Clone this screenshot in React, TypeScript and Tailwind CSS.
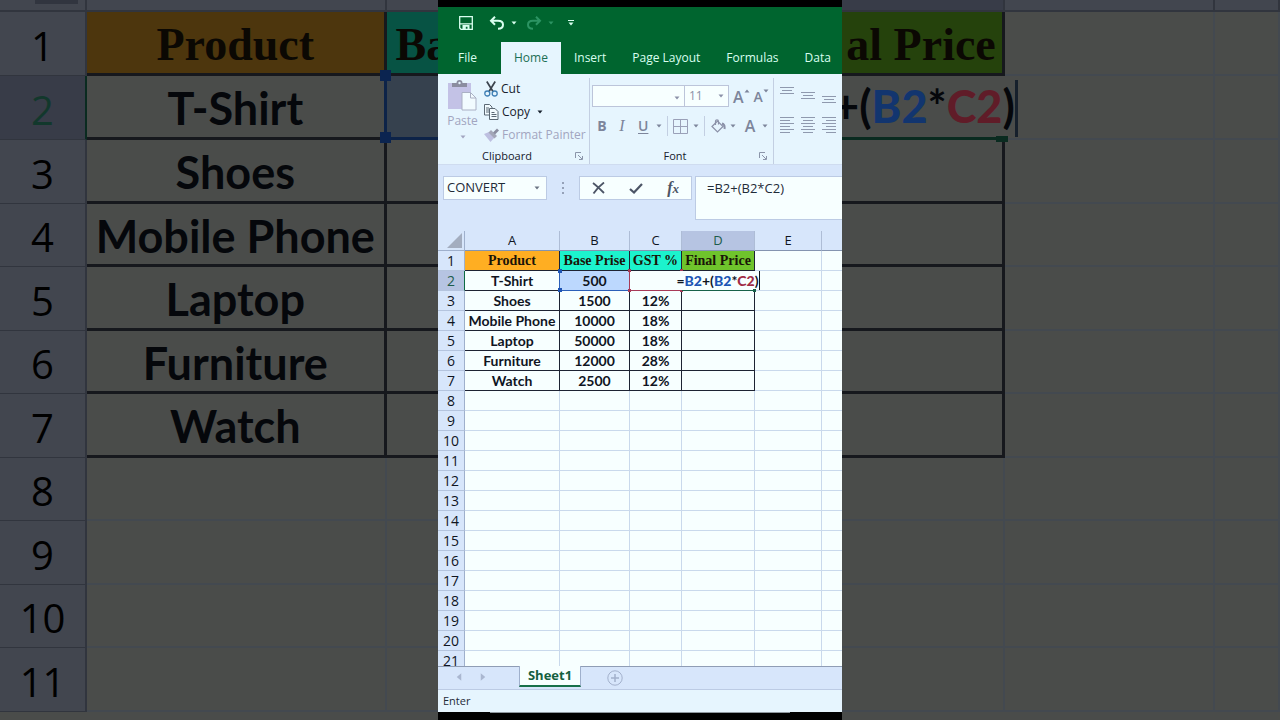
import type { ReactNode } from 'react';

interface RowData {
  product: string;
  price: string;
  gst: string;
}

const ROWS: RowData[] = [
  { product: 'T-Shirt', price: '500', gst: '' },
  { product: 'Shoes', price: '1500', gst: '12%' },
  { product: 'Mobile Phone', price: '10000', gst: '18%' },
  { product: 'Laptop', price: '50000', gst: '18%' },
  { product: 'Furniture', price: '12000', gst: '28%' },
  { product: 'Watch', price: '2500', gst: '12%' },
];

const EMPTY_ROWS = Array.from({ length: 14 }, (_, i) => i + 8);

const TABS = ['Insert', 'Page Layout', 'Formulas', 'Data'];

function Caret({ className = '' }: { className?: string }) {
  return (
    <svg viewBox="0 0 6 4" className={`w-[6px] h-1 shrink-0 ${className}`} fill="currentColor" aria-hidden="true">
      <path d="M.5.5h5L3 3.500z" />
    </svg>
  );
}

function Launcher() {
  return (
    <svg viewBox="0 0 8 8" className="size-2" fill="none" stroke="currentColor" aria-hidden="true">
      <path d="M.5 6V.5H6M3 3l4 4M7.500 4v3.500H4" />
    </svg>
  );
}

function SaveIcon() {
  return (
    <svg viewBox="0 0 14 14" className="size-[14px]" aria-hidden="true">
      <path d="M.7.7h12.600v12.600H2L.7 12z" fill="none" stroke="currentColor" strokeWidth="1.300" />
      <path d="M1 7.300h12V8.500H1zM3.500 9h7v4.500h-2V10.800H6.800v2.700H3.500z" fill="currentColor" />
    </svg>
  );
}

function UndoIcon({ className = '' }: { className?: string }) {
  return (
    <svg viewBox="0 0 16 14" className={`w-4 h-[14px] ${className}`} fill="none" stroke="currentColor" strokeWidth="2" aria-hidden="true">
      <path d="M6 .8 2 4.800l4 4M2.500 4.800H9c3 0 5 1.500 5 4s-2 4-5 4" />
    </svg>
  );
}

function PasteIcon() {
  return (
    <svg viewBox="0 0 29 31" className="w-[29px] h-[31px]" aria-hidden="true">
      <path d="M0 3h23v26H0z" fill="#c3c2e6" />
      <path d="M4 7V3h4.500C8.500 1 9.500 0 11.500 0S14.500 1 14.500 3H19v4z" fill="#8b8da0" />
      <circle cx="11.500" cy="3" r="1.200" fill="#e5f4fe" />
      <path d="M14 12.500h8.500l5.500 5.500v12H14z" fill="#f2fbff" stroke="#aab0c4" />
      <path d="M22.500 12.500V18H28" fill="none" stroke="#aab0c4" />
    </svg>
  );
}

function CutIcon() {
  return (
    <svg viewBox="0 0 14 16" className="w-[14px] h-4" fill="none" aria-hidden="true">
      <path d="M2.800.5 9 10.500M11.200.5 5 10.500" stroke="#3c434d" strokeWidth="1.700" />
      <circle cx="3.300" cy="12.500" r="2.500" stroke="#3f7fb4" strokeWidth="1.300" />
      <circle cx="10.700" cy="12.500" r="2.500" stroke="#3f7fb4" strokeWidth="1.300" />
    </svg>
  );
}

function CopyIcon() {
  return (
    <svg viewBox="0 0 15 16" className="w-[15px] h-4" fill="#f2fbff" stroke="#5b6874" aria-hidden="true">
      <path d="M.5.5h5l2.500 2.500v8H.5z" />
      <path d="M2 4h3M2 6h3M2 8h3" />
      <path d="M5.500 4.500h5.500l3 3v8H5.500z" />
      <path d="M7.500 8.500h3M7.500 10.500h5M7.500 12.500h5" />
    </svg>
  );
}

function PainterIcon() {
  return (
    <svg viewBox="0 0 15 14" className="w-[15px] h-[14px]" aria-hidden="true">
      <path d="M0 6 5 4l5.500 5.500L6.500 14z" fill="#bdbfe0" />
      <path d="m4.500 4.500 2.500-2.500 6 6-2.500 2.500z" fill="#a3a6b8" />
      <path d="m9 4.500 4-4 2 2-4 4z" fill="#8b8da0" />
    </svg>
  );
}

function BordersIcon() {
  return (
    <svg viewBox="0 0 15 15" className="size-[15px]" fill="none" stroke="#9aa0b8" aria-hidden="true">
      <path d="M.5.5h14v14H.5zM7.500 0v15M0 7.500h15" />
    </svg>
  );
}

function FillIcon() {
  return (
    <svg viewBox="0 0 15 14" className="w-[15px] h-[14px]" fill="none" stroke="#8b91a8" strokeWidth="1.200" aria-hidden="true">
      <path d="M1 7.500 6.500 2l5.500 5.500-5.500 5.500z" />
      <path d="M4.500 6V2.500C4.500.2 7.500.2 7.500 2.500v3" />
      <path d="M11 4.500c2 .5 3 2 2.500 5.500" strokeWidth="2" />
    </svg>
  );
}

function Lines({ d }: { d: string }) {
  return (
    <svg viewBox="0 0 14 16" className="w-[14px] h-4" fill="none" stroke="#8f99ae" aria-hidden="true">
      <path d={d} />
    </svg>
  );
}

const ALIGN_TOP = [
  { label: 'Top align', d: 'M0 .5h14M2 3.500h10M0 6.500h14' },
  { label: 'Middle align', d: 'M0 5.500h14M2 8.500h10M0 11.500h14' },
  { label: 'Bottom align', d: 'M0 9.500h14M2 12.500h10M0 15.500h14' },
];

const ALIGN_TEXT = [
  { label: 'Align left', d: 'M0 .5h14M0 3.500h10M0 6.500h14M0 9.500h10M0 12.500h14M0 15.500h10' },
  { label: 'Center', d: 'M0 .5h14M2 3.500h10M0 6.500h14M2 9.500h10M0 12.500h14M2 15.500h10' },
  { label: 'Align right', d: 'M0 .5h14M4 3.500h10M0 6.500h14M4 9.500h10M0 12.500h14M4 15.500h10' },
];

function Group({ label, className = '', children }: { label?: string; className?: string; children: ReactNode }) {
  return (
    <section aria-label={label ?? 'Alignment'} className={`flex flex-col shrink-0 ${className}`}>
      <div className="flex-1 min-h-0">{children}</div>
      {label && (
        <div className="flex items-center shrink-0 h-4 pr-[6px] text-[11px] text-[#16202c]">
          <span className="flex-1 text-center pl-[1px]">{label}</span>
          <button aria-label={`${label} settings`} className="text-[#8b95aa]"><Launcher /></button>
        </div>
      )}
    </section>
  );
}

function TitleBar() {
  return (
    <header className="bg-[#00652f] text-[#d9fff0]">
      <div className="flex items-center h-8 pl-[21px]">
        <button aria-label="Save"><SaveIcon /></button>
        <button aria-label="Undo" className="ml-4"><UndoIcon /></button>
        <button aria-label="Undo history" className="ml-[6px]"><Caret /></button>
        <button aria-label="Redo" className="ml-[9px] text-[#2c9463]"><UndoIcon className="-scale-x-100" /></button>
        <button aria-label="Redo history" className="ml-[6px] text-[#2c9463]"><Caret /></button>
        <button aria-label="Customize toolbar" className="ml-[14px] flex flex-col items-center gap-px">
          <span className="w-[6px] h-px bg-current" />
          <Caret />
        </button>
      </div>
      <nav className="flex pt-[3px] text-xs">
        <button className="h-8 w-[63px] pr-1 shrink-0">File</button>
        <button className="h-8 px-[13px] shrink-0 bg-[#e6f5fe] text-[#1c6f55]">Home</button>
        {TABS.map((t) => (
          <button key={t} className="h-8 px-[13px] shrink-0 whitespace-nowrap">{t}</button>
        ))}
      </nav>
    </header>
  );
}

function Ribbon() {
  return (
    <div className="flex h-[91px] pt-1 bg-[#e6f5fe] border-b border-[#cfdcf0] overflow-hidden">
      <Group label="Clipboard" className="w-[152px] border-r border-[#c3cfe2]">
        <div className="flex gap-[5px] pl-2 text-xs">
          <button className="flex flex-col items-center w-[33px] pt-[2px] text-[#a2a5c0]">
            <PasteIcon />
            <span className="leading-5">Paste</span>
            <Caret className="mt-1" />
          </button>
          <div className="flex flex-col text-[#16202c]">
            <button className="flex items-center gap-[3px] h-[23px] -mt-px"><CutIcon />Cut</button>
            <button className="flex items-center gap-[3px] h-[23px]"><CopyIcon />Copy<Caret className="ml-1" /></button>
            <button className="flex items-center gap-[3px] h-[23px] whitespace-nowrap text-[#a2a5c0]"><PainterIcon />Format Painter</button>
          </div>
        </div>
      </Group>

      <Group label="Font" className="w-[184px] border-r border-[#c3cfe2] text-[#7d859b]">
        <div className="flex items-start pt-[7px] pl-[2px]">
          <div className="grid items-center w-[93px] h-[22px] border border-[#bcc5da] bg-[#f7ffff] text-[#8b91a8]">
            <select aria-label="Font name" className="col-start-1 row-start-1 appearance-none w-full outline-none"><option /></select>
            <Caret className="col-start-1 row-start-1 justify-self-end mr-1 pointer-events-none" />
          </div>
          <div className="grid items-center w-11 h-[22px] border border-l-0 border-[#bcc5da] bg-[#f7ffff] text-xs text-[#8b91a8]">
            <select aria-label="Font size" defaultValue="11" className="col-start-1 row-start-1 appearance-none w-full pl-1 outline-none"><option>11</option></select>
            <Caret className="col-start-1 row-start-1 justify-self-end mr-1 pointer-events-none" />
          </div>
          <button aria-label="Increase font size" className="flex items-start ml-1 text-base leading-6 font-semibold">A<Caret className="rotate-180 mt-1" /></button>
          <button aria-label="Decrease font size" className="flex items-start ml-1 text-sm leading-6 font-semibold">A<Caret className="mt-1" /></button>
        </div>
        <div className="flex items-center h-5 mt-[7px] pl-[7px] text-sm">
          <button aria-label="Bold" className="w-[10px] font-bold">B</button>
          <button aria-label="Italic" className="w-[10px] ml-[10px] italic font-['Liberation_Serif',serif] text-base">I</button>
          <button aria-label="Underline" className="w-[10px] ml-[11px] font-semibold underline underline-offset-2">U</button>
          <Caret className="ml-2" />
          <span className="w-px h-5 ml-[5px] bg-[#c3cfe2]" />
          <button aria-label="Borders" className="ml-[5px]"><BordersIcon /></button>
          <Caret className="ml-[5px]" />
          <span className="w-px h-5 ml-[5px] bg-[#c3cfe2]" />
          <button aria-label="Fill color" className="ml-[6px]"><FillIcon /></button>
          <Caret className="ml-1" />
          <button aria-label="Font color" className="ml-2 w-3 text-base font-semibold">A</button>
          <Caret className="ml-[6px]" />
        </div>
      </Group>

      <Group className="w-[90px]">
        <div className="flex gap-[7px] pl-[6px] pt-[9px]">
          {ALIGN_TOP.map((a) => (
            <button key={a.label} aria-label={a.label}><Lines d={a.d} /></button>
          ))}
        </div>
        <div className="flex gap-[7px] pl-[6px] pt-[14px]">
          {ALIGN_TEXT.map((a) => (
            <button key={a.label} aria-label={a.label}><Lines d={a.d} /></button>
          ))}
        </div>
      </Group>
    </div>
  );
}

function FormulaBar() {
  return (
    <div className="flex items-start h-[66px] pt-[11px] pl-[5px] bg-[#d7e6fb] text-[13px] text-[#1f2b38]">
      <div className="flex items-center w-[104px] h-6 bg-[#f7ffff] border border-[#bccbe4]">
        <input aria-label="Name box" defaultValue="CONVERT" className="w-[84px] pl-[3px] bg-transparent outline-none" />
        <button aria-label="Names" className="ml-[6px] text-[#6b7483]"><Caret /></button>
      </div>
      <div className="flex flex-col justify-center gap-[3px] w-8 h-6 items-center">
        {[0, 1, 2].map((n) => <span key={n} className="size-[2px] bg-[#95a1b8]" />)}
      </div>
      <div className="flex items-center justify-between w-[113px] h-6 px-3 bg-[#f7ffff] border border-[#bccbe4] text-[#4c5566]">
        <button aria-label="Cancel">
          <svg viewBox="0 0 13 12" className="w-[13px] h-3" fill="none" stroke="currentColor" strokeWidth="1.800"><path d="M1 1c4 3 7 6 11 10M12 .5C8 3.500 4 7.500 1.500 11.500" /></svg>
        </button>
        <button aria-label="Enter">
          <svg viewBox="0 0 14 11" className="w-[14px] h-[11px]" fill="none" stroke="currentColor" strokeWidth="2.200"><path d="m1 6 4 3.500L13 1" /></svg>
        </button>
        <button aria-label="Insert function" className="font-['Liberation_Serif',serif] italic font-bold text-base leading-5">
          f<span className="text-[13px]">x</span>
        </button>
      </div>
      <textarea
        aria-label="Formula bar"
        defaultValue="=B2+(B2*C2)"
        className="flex-1 min-w-0 h-11 ml-[3px] pl-[11px] pt-px leading-5 resize-none outline-none bg-[#f7ffff] border border-r-0 border-[#bccbe4]"
      />
    </div>
  );
}

const rowHead = 'p-0 border-r border-b border-b-[#b4c4de] font-normal text-sm leading-[19px] font-["Open_Sans",sans-serif]';
const rowHeadIdle = 'bg-[#d7e6fb] border-r-[#9fb0cc]';
const rowHeadActive = 'bg-[#b6c4e2] text-[#1d5c4b] border-r-[#0d6b43]';
const cell = 'border-r border-b border-[#c9d9ec] p-0';
const inked = 'border-r border-b border-[#1d2333] p-0 text-center font-bold whitespace-nowrap';
const title = 'border-r border-b border-[#1d2333] p-0 text-center font-bold whitespace-nowrap font-["Liberation_Serif",serif] text-sm leading-[19px] text-[#1a1408]';

function Sheet() {
  return (
    <div className="flex-1 min-h-0 overflow-hidden bg-[#f7ffff]">
      <table className="table-fixed w-[450px] border-separate border-spacing-0 text-[#10151f] font-[Lato,sans-serif] text-sm leading-[19px]">
        <colgroup>
          <col className="w-[27px]" />
          <col className="w-[95px]" />
          <col className="w-[70px]" />
          <col className="w-[52px]" />
          <col className="w-[73px]" />
          <col className="w-[67px]" />
          <col />
        </colgroup>
        <thead className="font-['Open_Sans',sans-serif]">
          <tr className="h-5 bg-[#d7e6fb]">
            <th className="p-0 border-r border-b border-[#9fb0cc]">
              <svg viewBox="0 0 15 15" className="size-[15px] ml-auto mr-[2px]" aria-label="Select all"><path d="M15 0v15H0z" fill="#a3adbf" /></svg>
            </th>
            {['A', 'B', 'C', 'D', 'E', ''].map((c) => (
              <th
                key={c}
                scope="col"
                className={`p-0 border-r border-b border-r-[#aebdd6] border-b-[#8494b0] font-normal text-[13px] leading-[19px] ${c === 'D' ? 'bg-[#b6c4e2] text-[#1d5c4b]' : ''}`}
              >
                {c}
              </th>
            ))}
          </tr>
        </thead>
        <tbody>
          <tr className="h-5">
            <th scope="row" className={`${rowHead} ${rowHeadIdle}`}>1</th>
            <td className={`${title} bg-[#ffae22]`}>Product</td>
            <td className={`${title} bg-[#1cf3cd]`}>Base Prise</td>
            <td className={`${title} bg-[#1cf3cd]`}>GST %</td>
            <td className={`${title} bg-[#6fc42c]`}>Final Price</td>
            <td className={cell} />
            <td className={cell} />
          </tr>
          {ROWS.map((r, i) => {
            const active = i === 0;
            return (
              <tr key={r.product} className="h-5">
                <th scope="row" className={`${rowHead} ${active ? rowHeadActive : rowHeadIdle}`}>{i + 2}</th>
                <td className={inked}>{r.product}</td>
                <td className={`${inked} ${active ? 'relative bg-[#bcd8fe] border-b-[#2c5fb8] border-r-[#a83a58]' : ''}`}>
                  {r.price}
                  {active && (
                    <>
                      <span className="absolute -left-px inset-y-0 w-px bg-[#2c5fb8]" />
                      <span className="absolute -left-[2px] -top-[2px] size-1 bg-[#1f55b5]" />
                      <span className="absolute -left-[2px] -bottom-[2px] size-1 bg-[#1f55b5]" />
                    </>
                  )}
                </td>
                <td className={`${inked} ${active ? 'relative border-b-[#a83a58] border-r-transparent' : ''}`}>
                  {r.gst}
                  {active && (
                    <>
                      <span className="absolute -left-[2px] -top-[2px] size-[3px] bg-[#a83a58]" />
                      <span className="absolute -left-[2px] -bottom-[2px] size-[3px] bg-[#a83a58]" />
                      <span className="absolute -right-[2px] -top-[2px] size-[3px] bg-[#a83a58]" />
                      <span className="absolute -right-[2px] -bottom-[2px] size-[3px] bg-[#a83a58]" />
                    </>
                  )}
                </td>
                <td className={`${inked} ${active ? 'relative border-b-[#17624a] border-r-transparent' : ''}`}>
                  {active && (
                    <>
                      <div className="flex justify-center">
                        <span className="shrink-0 bg-[#f7ffff] border-r border-[#10151f]">
                          =<b className="text-[#1c55b4]">B2</b>+(<b className="text-[#1c55b4]">B2</b>*<b className="text-[#a02c46]">C2</b>)
                        </span>
                      </div>
                      <span className="absolute -right-[2px] -bottom-[2px] size-[3px] bg-[#17624a]" />
                    </>
                  )}
                </td>
                <td className={cell} />
                <td className={cell} />
              </tr>
            );
          })}
          {EMPTY_ROWS.map((n) => (
            <tr key={n} className="h-5">
              <th scope="row" className={`${rowHead} ${rowHeadIdle}`}>{n}</th>
              {[0, 1, 2, 3, 4, 5].map((c) => <td key={c} className={cell} />)}
            </tr>
          ))}
        </tbody>
      </table>
    </div>
  );
}

function SheetTabs() {
  return (
    <div className="flex items-start h-6 bg-[#d7e6fb] border-t border-t-[#8f9db5] border-b border-b-[#bccbe4]">
      <button aria-label="Previous sheet" className="flex items-center h-5 ml-[18px] text-[#aab7d0]"><Caret className="rotate-90 scale-150" /></button>
      <button aria-label="Next sheet" className="flex items-center h-5 ml-[18px] text-[#aab7d0]"><Caret className="-rotate-90 scale-150" /></button>
      <button className="h-[21px] w-[62px] ml-[33px] -mt-px bg-[#f7ffff] border-x border-x-[#9fb0cc] border-b-2 border-b-[#17704a] font-bold text-[13px] leading-[19px] text-[#14603f]">
        Sheet1
      </button>
      <button aria-label="New sheet" className="ml-[26px] mt-[3px] text-[#a3b1cc]">
        <svg viewBox="0 0 16 16" className="size-4" fill="none" stroke="currentColor"><circle cx="8" cy="8" r="7.200" /><path d="M8 4v8M4 8h8" strokeWidth="1.500" /></svg>
      </button>
    </div>
  );
}

const dimHead = 'px-0 pt-1 pb-0 border-r-2 border-b font-normal text-[40px] leading-none font-["Open_Sans",sans-serif]';
const dimHeadIdle = 'bg-[#42464f] border-[#31353e] text-black';
const dimHeadActive = 'bg-[#383c48] border-b-[#31353e] border-r-[#0a2b20] text-[#12382c]';
const dimInk = 'px-0 pt-1 pb-0 border-r-[3px] border-b-[3px] border-[#16181d] text-center font-bold text-[45px] leading-none whitespace-nowrap text-[#05070b]';
const dimTitle = 'px-0 pt-1 pb-0 border-r-[3px] border-b-[3px] border-[#16181d] font-bold font-["Liberation_Serif",serif] text-[46px] leading-none whitespace-nowrap text-[#0b0803]';
const dimCell = 'p-0 border-r-2 border-b-2 border-[#434950]';

// enlarged, dimmed copy of the sheet behind the app; cells under the app stay blank
function Backdrop() {
  return (
    <div aria-hidden="true" className="col-start-1 row-start-1 min-w-0 overflow-hidden bg-[#4a4c4a]">
      <table className="table-fixed w-full border-separate border-spacing-0 font-[Lato,sans-serif]">
        <colgroup>
          <col className="w-[6.8%]" />
          <col className="w-[23.4%]" />
          <col className="w-[17.3%]" />
          <col className="w-[12.8%]" />
          <col className="w-[18.2%]" />
          <col className="w-[16.4%]" />
          <col />
        </colgroup>
        <tbody>
          <tr className="h-3 bg-[#42464f]">
            {[0, 1, 2, 3, 4, 5, 6].map((c) => (
              <td key={c} className={`p-0 align-top border-r-2 border-b-2 border-[#31353e] ${c === 4 ? 'bg-[#383c48]' : ''}`}>
                {c === 0 && <div className="w-[43px] h-1 ml-auto mr-[7px] bg-[#31353f]" />}
              </td>
            ))}
          </tr>
          <tr className="h-16">
            <th className={`${dimHead} ${dimHeadIdle}`}>1</th>
            <td className={`${dimTitle} text-center bg-[#4d360d]`}>Product</td>
            <td className={`${dimTitle} pl-[9px] text-left bg-[#075344]`}>Ba</td>
            <td className={`${dimTitle} bg-[#075344]`} />
            <td className={`${dimTitle} pr-[6px] text-right bg-[#25420c]`}>al Price</td>
            <td className={dimCell} />
            <td className={dimCell} />
          </tr>
          {ROWS.map((r, i) => {
            const active = i === 0;
            return (
              <tr key={r.product} className="h-16 odd:h-[63px]">
                <th className={`${dimHead} ${active ? dimHeadActive : dimHeadIdle}`}>{i + 2}</th>
                <td className={dimInk}>{r.product}</td>
                <td className={`${dimInk} ${active ? 'relative bg-[#36414e] border-b-[#0d2348]' : ''}`}>
                  {active && (
                    <>
                      <span className="absolute -left-[3px] inset-y-0 w-[3px] bg-[#0d2348]" />
                      <span className="absolute -left-[7px] -top-[6px] size-[11px] bg-[#0b2450]" />
                      <span className="absolute -left-[7px] -bottom-[6px] size-[11px] bg-[#0b2450]" />
                    </>
                  )}
                </td>
                <td className={dimInk} />
                <td className={`${dimInk} ${active ? 'relative border-b-[#0a2b20] border-r-transparent' : ''}`}>
                  {active && (
                    <>
                      <div className="flex justify-end -mr-4">
                        <span className="shrink-0 pt-1 pb-2 border-r-[3px] border-[#16202c] bg-[#4a4c4a]">
                          +(<b className="text-[#12356f]">B2</b>*<b className="text-[#601c28]">C2</b>)
                        </span>
                      </div>
                      <span className="absolute -right-[6px] -bottom-[5px] w-3 h-[6px] bg-[#0a2b20]" />
                    </>
                  )}
                </td>
                <td className={dimCell} />
                <td className={dimCell} />
              </tr>
            );
          })}
          {EMPTY_ROWS.slice(0, 4).map((n) => (
            <tr key={n} className="h-16 odd:h-[63px]">
              <th className={`${dimHead} ${dimHeadIdle}`}>{n}</th>
              {[0, 1, 2, 3, 4, 5].map((c) => <td key={c} className={dimCell} />)}
            </tr>
          ))}
        </tbody>
      </table>
    </div>
  );
}

export default function App() {
  return (
    <div className="grid grid-cols-[minmax(0,1fr)] grid-rows-[minmax(0,1fr)] h-screen overflow-hidden bg-[#4a4c4a] font-['Open_Sans',sans-serif]">
      <Backdrop />
      <main className="col-start-1 row-start-1 justify-self-center relative flex flex-col min-h-0 w-[404px] max-w-full pt-[7px] pb-[7px] bg-black overflow-hidden">
        <TitleBar />
        <Ribbon />
        <FormulaBar />
        <Sheet />
        <SheetTabs />
        <footer className="h-[22px] pl-[5px] text-[11px] leading-[22px] bg-[#e6f5fe] text-[#1f2b38]">Enter</footer>
        <div className="w-[300px] h-px self-center bg-[#8f989f]" />
      </main>
    </div>
  );
}
